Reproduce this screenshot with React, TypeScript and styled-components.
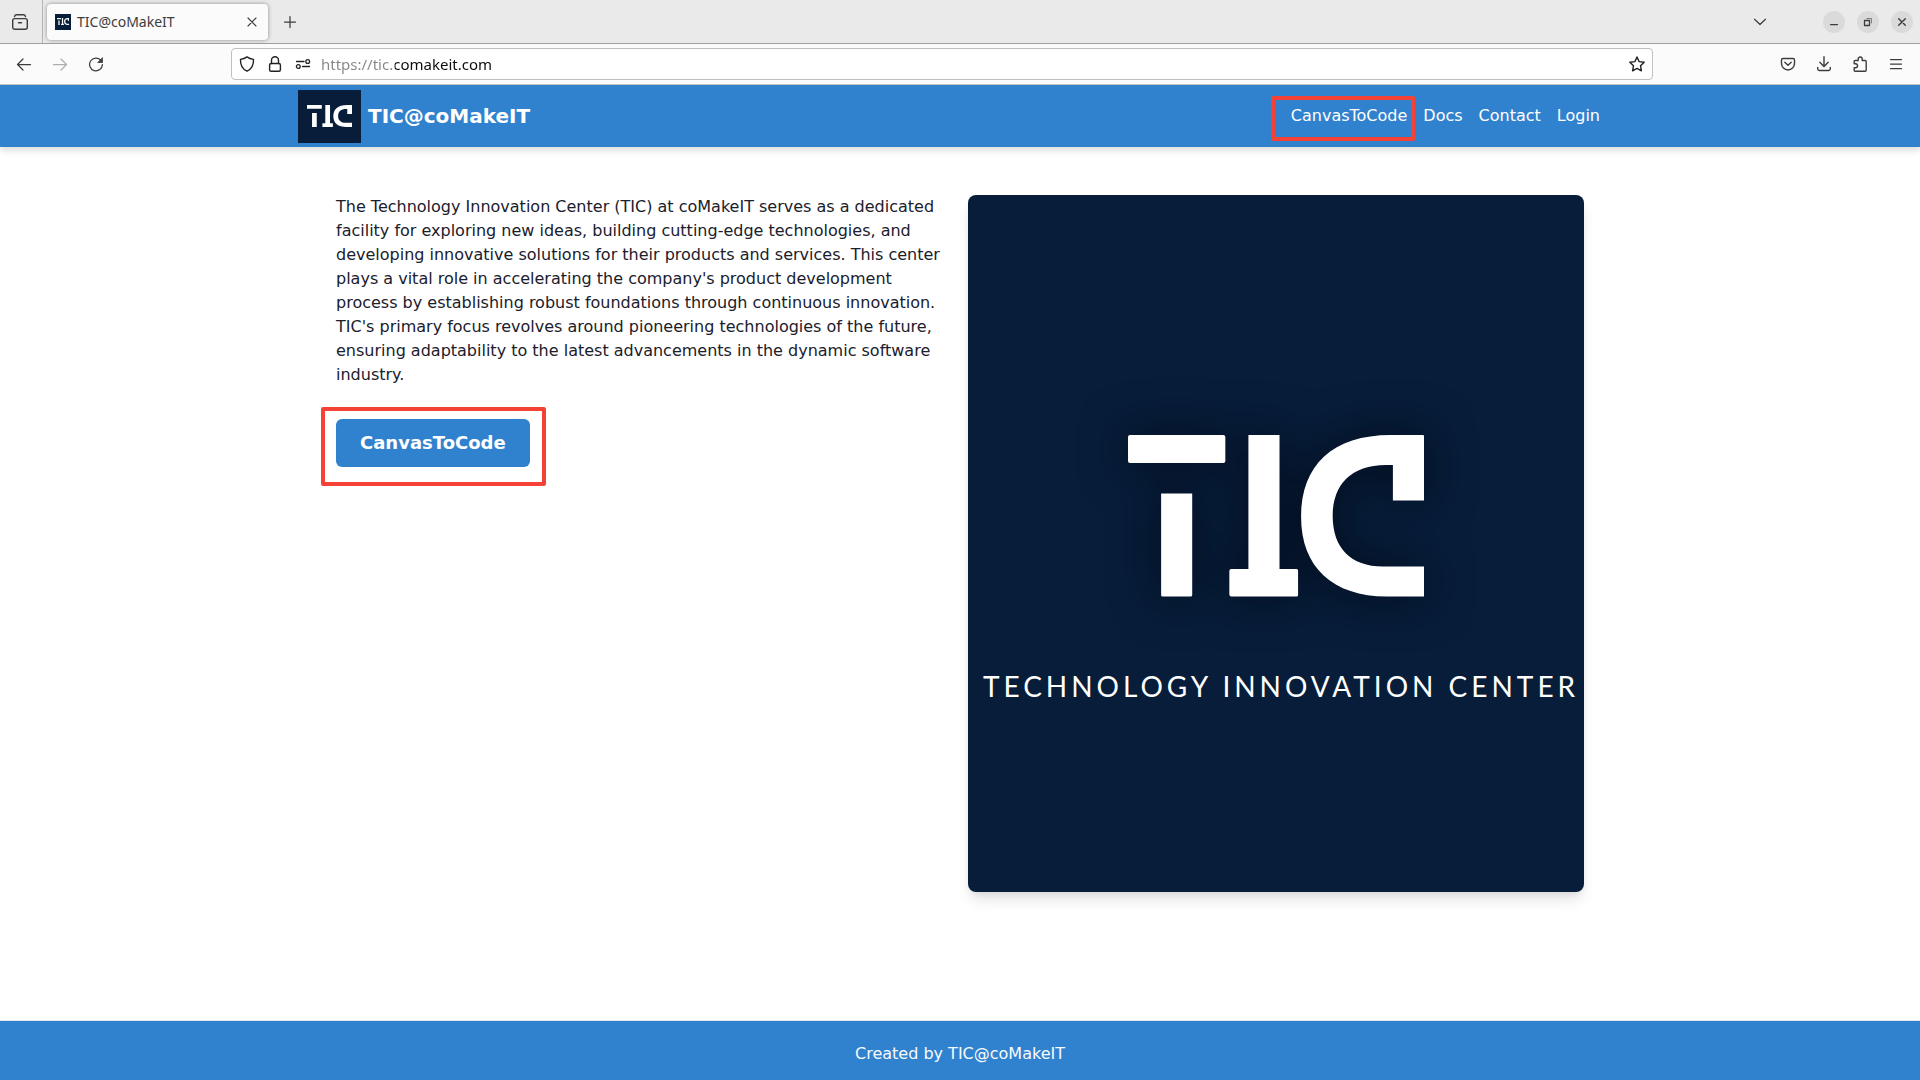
import React from "react";
import styled, { createGlobalStyle } from "styled-components";

const uiFont = `"Noto Sans", "Open Sans", sans-serif`;
const pageFont = `"DejaVu Sans", sans-serif`;
const blue = "#3182ce";
const navy = "#071d3a";
const red = "#f44336";

const GlobalStyle = createGlobalStyle`
  *, *::before, *::after { box-sizing: border-box; }
  body { margin: 0; background: #fff; color: #1a202c; font: 16px/24px ${pageFont}; }
  button { border: 0; padding: 0; background: none; font: inherit; color: inherit; cursor: pointer; }
  a { color: inherit; text-decoration: none; }
  p, h1 { margin: 0; }
  svg { display: block; }
`;

const Window = styled.div`
  display: flex;
  flex-direction: column;
  min-height: 100vh;
`;

const TabBar = styled.div`
  display: flex;
  align-items: center;
  height: 44px;
  padding-right: 7px;
  background: #eaeaea;
  border-bottom: 1px solid #a0a0a0;
  color: #3d3d3d;
  font: 14px/20px ${uiFont};
`;

const RecentSlot = styled.div`
  display: flex;
  align-items: center;
  justify-content: center;
  align-self: stretch;
  width: 43px;
  padding-right: 2px;
  border-right: 1px solid #b4b4b4;
`;

const Tab = styled.div`
  display: flex;
  align-items: center;
  gap: 6px;
  width: 221px;
  height: 36px;
  margin: 0 4px;
  padding: 0 4px 0 8px;
  border-radius: 4px;
  background: #fbfbfb;
  box-shadow: 0 0 4px rgba(0, 0, 0, 0.4);
`;

const TabTitle = styled.span`
  flex: 1;
`;

const IconButton = styled.button<{ $width?: number; $faded?: boolean }>`
  display: flex;
  align-items: center;
  justify-content: center;
  flex: none;
  width: ${(p) => p.$width ?? 36}px;
  height: 28px;
  opacity: ${(p) => (p.$faded ? 0.4 : 1)};
`;

const WindowControls = styled.div`
  display: flex;
  align-items: center;
  gap: 12px;
  margin-left: auto;
`;

const ControlButton = styled.button`
  display: flex;
  align-items: center;
  justify-content: center;
  width: 22px;
  height: 22px;
  border-radius: 50%;
  background: #dadada;
`;

const TabListButton = styled(IconButton)`
  margin-right: 33px;
`;

const Toolbar = styled.div`
  display: flex;
  align-items: center;
  height: 41px;
  padding: 0 6px;
  background: #fbfbfb;
  border-bottom: 1px solid #c6c6c6;
  color: #3d3d3d;
`;

const AddressBar = styled.form`
  display: flex;
  align-items: center;
  flex: 1;
  height: 32px;
  margin: 0 117px;
  padding: 0 1px;
  border: 1px solid #c0c0c0;
  border-radius: 4px;
  background: #fff;
  color: #222;
`;

const AddressInput = styled.input`
  flex: 1;
  min-width: 0;
  height: 28px;
  padding: 0;
  margin-left: 4px;
  border: 0;
  outline: 0;
  font: 15px/20px ${uiFont};
  color: transparent;
  background: linear-gradient(90deg, #858585 74px, #0c0c0d 74px);
  background-clip: text;
  -webkit-background-clip: text;
`;

const SiteHeader = styled.header`
  position: relative;
  background: ${blue};
  color: #fff;
  box-shadow: 0 4px 6px rgba(0, 0, 0, 0.12);
`;

const HeaderInner = styled.div`
  display: flex;
  align-items: center;
  justify-content: space-between;
  max-width: 1324px;
  height: 62px;
  margin: 0 auto;
  padding-right: 22px;
`;

const Brand = styled.a`
  display: flex;
  align-items: center;
  gap: 7px;
  font-size: 20px;
  font-weight: 700;
`;

const LogoTile = styled.span<{ $width: number; $height: number }>`
  display: flex;
  align-items: center;
  justify-content: center;
  width: ${(p) => p.$width}px;
  height: ${(p) => p.$height}px;
  background: ${navy};
`;

const NavLinks = styled.nav`
  display: flex;
  gap: 16px;
`;

const Highlighted = styled.span<{ $inset: string }>`
  position: relative;
  display: inline-block;

  &::after {
    content: "";
    position: absolute;
    inset: ${(p) => p.$inset};
    border: 4px solid ${red};
    border-radius: 2px;
    pointer-events: none;
  }
`;

const Main = styled.main`
  flex: 1;
  display: grid;
  grid-template-columns: 1fr 1fr;
  align-items: start;
  gap: 16px;
  width: 100%;
  max-width: 1280px;
  margin: 0 auto;
  padding: 48px 16px;
`;

const Intro = styled.section`
  display: flex;
  flex-direction: column;
  align-items: flex-start;
  gap: 32px;
`;

const PrimaryButton = styled.button`
  display: block;
  height: 48px;
  padding: 0 24px;
  border-radius: 6px;
  background: ${blue};
  color: #fff;
  font-size: 18px;
  font-weight: 700;
`;

const Poster = styled.figure`
  display: flex;
  flex-direction: column;
  align-items: center;
  gap: 71px;
  aspect-ratio: 616 / 697;
  margin: 0;
  padding-top: 240px;
  border-radius: 8px;
  background: ${navy};
  box-shadow: 0 10px 15px -3px rgba(0, 0, 0, 0.12), 0 4px 6px -2px rgba(0, 0, 0, 0.06);
  overflow: hidden;

  svg { filter: drop-shadow(0 0 24px rgba(0, 4, 14, 0.75)); }
`;

const Caption = styled.figcaption`
  padding-left: 10px;
  color: #fff;
  font: 400 28px/36px Lato, sans-serif;
  letter-spacing: 4px;
  white-space: nowrap;
`;

const Footer = styled.footer`
  display: flex;
  align-items: center;
  justify-content: center;
  height: 60px;
  padding-top: 6px;
  border-top: 1px solid #e2e8f0;
  background: ${blue};
  color: #f7fafc;
`;

const Mark = ({ width, height }: { width: number; height: number }) => (
  <svg width={width} height={height} viewBox="0 0 295 162" preserveAspectRatio="none" fill="#fff" aria-hidden="true">
    <rect width="97" height="28" rx="2" />
    <path d="M33 58.5h31V160q0 1.5-1.500 1.500h-28q-1.500 0-1.500-1.500z" />
    <path d="M120 0h31v134h17q1.500 0 1.500 1.500V160q0 1.500-1.500 1.500h-65q-2 0-2-2V136q0-2 2-2h17z" />
    <path d="M294 0q1 0 1 1v64.500h-31V30h-7C223 30 204 49 204 81c0 32 18 50.500 50 50.500h41v30h-37C204 161.500 172.500 132 172.500 82 172.500 30 204 0 262 0z" />
  </svg>
);

const Icon = ({ size = 16, width = 1.25, children }: { size?: number; width?: number; children: React.ReactNode }) => (
  <svg
    width={size}
    height={size}
    viewBox="0 0 16 16"
    fill="none"
    stroke="currentColor"
    strokeWidth={width}
    strokeLinecap="round"
    strokeLinejoin="round"
    aria-hidden="true"
  >
    {children}
  </svg>
);

const App = () => (
  <Window>
    <GlobalStyle />
    <TabBar>
      <RecentSlot>
        <IconButton aria-label="Recent browsing" $width={28}>
          <Icon width={1.4}>
            <rect x=".7" y="4.600" width="14.600" height="10.700" rx="2" />
            <path d="M2.500 2.600C2.800 1.300 3.500.8 4.500.8h7c1 0 1.700.5 2 1.800M6.500 8.800h3" />
          </Icon>
        </IconButton>
      </RecentSlot>
      <Tab>
        <LogoTile $width={16} $height={16}>
          <Mark width={12} height={7} />
        </LogoTile>
        <TabTitle>TIC@coMakeIT</TabTitle>
        <IconButton aria-label="Close tab" $width={24}>
          <Icon width={1.1}>
            <path d="M4 4l8 8M12 4l-8 8" />
          </Icon>
        </IconButton>
      </Tab>
      <IconButton aria-label="New tab">
        <Icon>
          <path d="M8 2.500v11M2.500 8h11" />
        </Icon>
      </IconButton>
      <WindowControls>
        <TabListButton aria-label="List all tabs">
          <Icon>
            <path d="M2.500 5.300L8 10.500l5.500-5.200" />
          </Icon>
        </TabListButton>
        <ControlButton aria-label="Minimize">
          <Icon>
            <path d="M4.500 10.500h7" />
          </Icon>
        </ControlButton>
        <ControlButton aria-label="Restore">
          <Icon width={1}>
            <path d="M4.500 6.500h5v5h-5z" strokeWidth="1.300" />
            <path d="M7 4.500h4.500V9" opacity=".6" />
          </Icon>
        </ControlButton>
        <ControlButton aria-label="Close">
          <Icon width={1.4}>
            <path d="M4.700 4.700l6.600 6.600M11.300 4.700l-6.600 6.600" />
          </Icon>
        </ControlButton>
      </WindowControls>
    </TabBar>

    <Toolbar>
      <IconButton aria-label="Back">
        <Icon>
          <path d="M14.500 8.500H1.500M7 3L1.500 8.500 7 14" />
        </Icon>
      </IconButton>
      <IconButton aria-label="Forward" $faded>
        <Icon>
          <path d="M1.500 8.500h13M9 3l5.500 5.500L9 14" />
        </Icon>
      </IconButton>
      <IconButton aria-label="Reload">
        <Icon>
          <path d="M12.800 4.200A6.400 6.400 0 1 0 14.400 8.500" />
          <path d="M14.500 2v4.500H10z" fill="currentColor" strokeWidth=".8" />
        </Icon>
      </IconButton>
      <AddressBar onSubmit={(e) => e.preventDefault()}>
        <IconButton type="button" aria-label="Tracking protection" $width={28}>
          <Icon width={1.4}>
            <path d="M8 .9c2 1.500 4 2.100 6.500 2.500.3 5.500-1.600 9.600-6.500 11.800C3.100 13 1.200 8.900 1.500 3.400 4 3 6 2.400 8 .9z" />
          </Icon>
        </IconButton>
        <IconButton type="button" aria-label="Connection secure" $width={28}>
          <Icon width={1.4}>
            <rect x="2.600" y="7.500" width="10.800" height="7.800" rx="1.500" />
            <path d="M4.500 7.500V4.300a3.500 3.500 0 0 1 7 0v3.200" />
          </Icon>
        </IconButton>
        <IconButton type="button" aria-label="Site permissions" $width={28}>
          <Icon width={1.3}>
            <path d="M1.500 5.500H9M7.500 10.500h7" />
            <circle cx="12.700" cy="5.500" r="1.900" />
            <circle cx="3.300" cy="10.500" r="1.900" />
          </Icon>
        </IconButton>
        <AddressInput aria-label="Address" defaultValue="https://tic.comakeit.com" spellCheck={false} />
        <IconButton type="button" aria-label="Bookmark this page" $width={28}>
          <Icon width={1.4}>
            <path d="M8 1l2.100 4.600 5.100.6-3.700 3.500.9 5.100L8 12.400l-4.400 2.400.9-5.100L.8 6.200l5.100-.6z" />
          </Icon>
        </IconButton>
      </AddressBar>
      <IconButton aria-label="Save to Pocket">
        <Icon width={1.4}>
          <path d="M3 2.500h10q1.500 0 1.500 1.500v3.500a6.500 6.500 0 0 1-13 0V4Q1.500 2.500 3 2.500z" />
          <path d="M4.800 6.200L8 9.200l3.200-3" />
        </Icon>
      </IconButton>
      <IconButton aria-label="Downloads">
        <Icon width={1.4}>
          <path d="M8 .8v9.500M3.800 6.200L8 10.400l4.200-4.200M1.700 11.500v1.300q0 1.700 1.700 1.700h9.200q1.700 0 1.700-1.700v-1.300" />
        </Icon>
      </IconButton>
      <IconButton aria-label="Extensions">
        <Icon width={1.4}>
          <path d="M2.200 7.800V5.500q0-1 1-1h3V3a2 2 0 0 1 4 0v1.500h3q1 0 1 1v8.700q0 1-1 1H3.200q-1 0-1-1v-2.400h1.300a2 2 0 0 0 0-4z" />
        </Icon>
      </IconButton>
      <IconButton aria-label="Open application menu">
        <Icon>
          <path d="M2.500 3.500h11M2.500 8h11M2.500 12.500h11" />
        </Icon>
      </IconButton>
    </Toolbar>

    <SiteHeader>
      <HeaderInner>
        <Brand href="#">
          <LogoTile $width={63} $height={53}>
            <Mark width={45} height={22} />
          </LogoTile>
          TIC@coMakeIT
        </Brand>
        <NavLinks>
          <Highlighted $inset="-8px -8px -13px -20px">
            <a href="#canvas">CanvasToCode</a>
          </Highlighted>
          <a href="#docs">Docs</a>
          <a href="#contact">Contact</a>
          <a href="#login">Login</a>
        </NavLinks>
      </HeaderInner>
    </SiteHeader>

    <Main>
      <Intro>
        <p>
          The Technology Innovation Center (TIC) at coMakeIT serves as a dedicated facility for exploring new ideas,
          building cutting-edge technologies, and developing innovative solutions for their products and services. This
          center plays a vital role in accelerating the company's product development process by establishing robust
          foundations through continuous innovation. TIC's primary focus revolves around pioneering technologies of the
          future, ensuring adaptability to the latest advancements in the dynamic software industry.
        </p>
        <Highlighted $inset="-12px -16px -19px -15px">
          <PrimaryButton>CanvasToCode</PrimaryButton>
        </Highlighted>
      </Intro>
      <Poster>
        <Mark width={296} height={162} />
        <Caption>TECHNOLOGY INNOVATION CENTER</Caption>
      </Poster>
    </Main>

    <Footer>Created by TIC@coMakeIT</Footer>
  </Window>
);

export default App;
